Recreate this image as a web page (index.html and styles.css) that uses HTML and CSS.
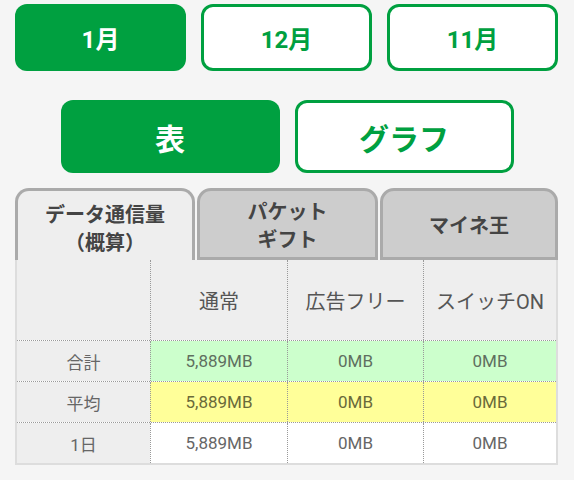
FILE: index.html
```html
<!DOCTYPE html>
<html lang="ja">
<head>
<meta charset="utf-8">
<link rel="stylesheet" href="styles.css">
</head>
<body>
<div class="months">
  <div class="btn solid">1月</div>
  <div class="btn outline">12月</div>
  <div class="btn outline">11月</div>
</div>
<div class="views">
  <div class="vbtn solid">表</div>
  <div class="vbtn outline">グラフ</div>
</div>
<div class="tabs">
  <div class="tab active t1">データ通信量<br>（概算）</div>
  <div class="tab t2">パケット<br>ギフト</div>
  <div class="tab t3">マイネ王</div>
</div>
<div class="table">
  <div class="row head">
    <div class="cell label"></div>
    <div class="cell">通常</div>
    <div class="cell">広告フリー</div>
    <div class="cell">スイッチON</div>
  </div>
  <div class="row total">
    <div class="cell label">合計</div>
    <div class="cell num">5,889MB</div>
    <div class="cell num">0MB</div>
    <div class="cell num">0MB</div>
  </div>
  <div class="row avg">
    <div class="cell label">平均</div>
    <div class="cell num">5,889MB</div>
    <div class="cell num">0MB</div>
    <div class="cell num">0MB</div>
  </div>
  <div class="row day">
    <div class="cell label">1日</div>
    <div class="cell num">5,889MB</div>
    <div class="cell num">0MB</div>
    <div class="cell num">0MB</div>
  </div>
</div>
</body>
</html>
```
FILE: styles.css
```css
html, body {
  margin: 0;
  padding: 0;
  background: #f5f5f5;
  font-family: "Roboto", "Noto Sans CJK JP", sans-serif;
  color: #555;
}
.months {
  display: flex;
  gap: 15px;
  padding: 4px 16px 0 15px;
}
.btn, .vbtn {
  box-sizing: border-box;
  display: flex;
  align-items: center;
  justify-content: center;
  border-radius: 12px;
  font-weight: bold;
}
.btn {
  flex: none;
  width: 171px;
  height: 67px;
  font-size: 24px;
}
.solid {
  background: #00a040;
  color: #fff;
}
.outline {
  background: #fff;
  border: 3px solid #00a040;
  color: #00a040;
}
.views {
  display: flex;
  justify-content: center;
  gap: 15px;
  margin-top: 29px;
}
.vbtn {
  width: 219px;
  height: 73px;
  font-size: 30px;
}
.tabs {
  display: flex;
  gap: 2px;
  margin: 15px 16px 0 15px;
  height: 72px;
}
.tab {
  box-sizing: border-box;
  display: flex;
  align-items: center;
  justify-content: center;
  text-align: center;
  border: 3px solid #aaa;
  border-radius: 14px 14px 0 0;
  background: #cdcdcd;
  color: #444;
  font-weight: bold;
  font-size: 20px;
  line-height: 28px;
  font-family: "Noto Sans CJK JP", sans-serif;
  padding-top: 2px;
}
.tab.active {
  background: #eee;
  border-bottom: none;
  padding-top: 4px;
}
.t1 { width: 180px; }
.t2 { width: 181px; }
.t3 { flex: 1; }
.table {
  margin: 0 16px 0 15px;
  background: #fff;
  border-right: 2px solid #ddd;
  border-bottom: 2px solid #ddd;
  border-left: 2px solid #ddd;
  box-sizing: border-box;
}
.row {
  display: grid;
  grid-template-columns: 133px 137px 136px 1fr;
  height: 40px;
  border-top: 1px dotted #999;
}
.row.head {
  height: 80px;
  border-top: none;
  background: #eee;
}
.cell {
  display: flex;
  align-items: center;
  justify-content: center;
  border-left: 1px dotted #999;
  font-size: 20px;
}
.cell:first-child {
  border-left: none;
}
.cell.label {
  background: #eee;
  font-size: 17px;
  color: #666;
}
.cell.num {
  font-size: 17px;
  color: #666;
}
.total .num { background: #ccffcc; color: #5f6f5f; }
.avg .num { background: #ffff99; color: #6a6a3a; }
.day .num { background: #fff; }
```
